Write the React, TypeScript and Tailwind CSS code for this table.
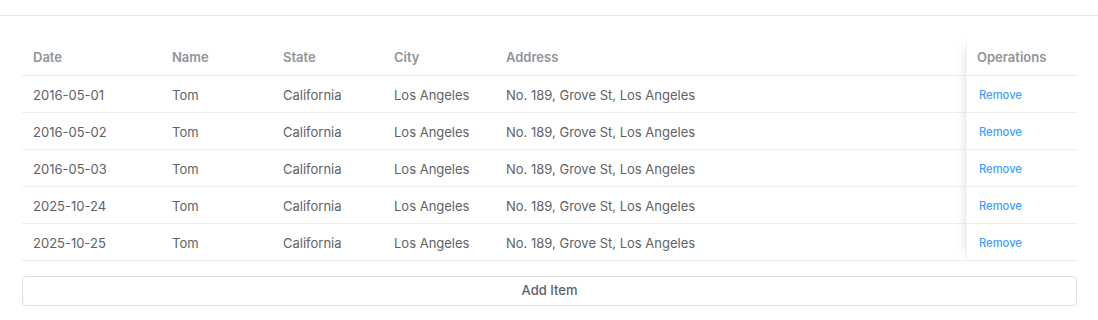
import React, { useState } from 'react';

type Row = {
  date: string;
  name: string;
  state: string;
  city: string;
  address: string;
};

const initialRows: Row[] = [
  { date: '2016-05-01', name: 'Tom', state: 'California', city: 'Los Angeles', address: 'No. 189, Grove St, Los Angeles' },
  { date: '2016-05-02', name: 'Tom', state: 'California', city: 'Los Angeles', address: 'No. 189, Grove St, Los Angeles' },
  { date: '2016-05-03', name: 'Tom', state: 'California', city: 'Los Angeles', address: 'No. 189, Grove St, Los Angeles' },
  { date: '2025-10-24', name: 'Tom', state: 'California', city: 'Los Angeles', address: 'No. 189, Grove St, Los Angeles' },
  { date: '2025-10-25', name: 'Tom', state: 'California', city: 'Los Angeles', address: 'No. 189, Grove St, Los Angeles' },
];

// widths of the scrolling columns
const cols: { key: keyof Row; label: string; w: string }[] = [
  { key: 'date', label: 'Date', w: 'w-[139px]' },
  { key: 'name', label: 'Name', w: 'w-[111px]' },
  { key: 'state', label: 'State', w: 'w-[111px]' },
  { key: 'city', label: 'City', w: 'w-[112px]' },
  { key: 'address', label: 'Address', w: 'w-[471px]' },
];

export default function App() {
  const [rows, setRows] = useState<Row[]>(initialRows);

  const removeRow = (i: number) => setRows(rows.filter((_, idx) => idx !== i));

  const addItem = () => {
    const d = new Date();
    d.setDate(d.getDate() + rows.length);
    setRows([
      ...rows,
      { date: d.toISOString().split('T')[0], name: 'Tom', state: 'California', city: 'Los Angeles', address: 'No. 189, Grove St, Los Angeles' },
    ]);
  };

  return (
    <div className="min-h-[320px] bg-white font-['Inter',sans-serif] text-[13px]">
      <div className="h-[16px] border-b border-[#e4e7ed]" />

      <div className="pl-[22px] pr-[21px] pt-[22px]">
        {/* table */}
        <div className="flex">
          <div className="w-[944px]">
            <div className="flex h-[38px] items-center border-b border-[#ebeef5] pt-[2px] font-semibold text-[#909399]">
              {cols.map((c) => (
                <div key={c.key} className={`${c.w} pl-[11px]`}>
                  {c.label}
                </div>
              ))}
            </div>
            {rows.map((r, i) => (
              <div key={i} className="flex h-[37px] items-center border-b border-[#ebeef5] pt-[3px] text-[#606266]">
                {cols.map((c) => (
                  <div key={c.key} className={`${c.w} pl-[11px]`}>
                    {r[c.key]}
                  </div>
                ))}
              </div>
            ))}
          </div>

          {/* fixed right column */}
          <div className="w-[111px] border-l border-[#f2f3f5] shadow-[-10px_0_10px_-10px_rgba(0,0,0,0.15)]">
            <div className="flex h-[38px] items-center border-b border-[#ebeef5] pl-[10px] pt-[2px] font-semibold text-[#909399]">
              Operations
            </div>
            {rows.map((_, i) => (
              <div key={i} className="flex h-[37px] items-center border-b border-[#ebeef5] pl-[12px] pt-[3px]">
                <button
                  type="button"
                  onClick={() => removeRow(i)}
                  className="text-[11.2px] font-medium text-[#409eff] hover:text-[#79bbff]"
                >
                  Remove
                </button>
              </div>
            ))}
          </div>
        </div>

        <button
          type="button"
          onClick={addItem}
          className="mt-[15px] flex h-[30px] w-full items-center justify-center rounded-[4px] border border-[#dcdfe6] bg-white font-medium text-[#606266] hover:border-[#c6e2ff] hover:bg-[#ecf5ff] hover:text-[#409eff]"
        >
          Add Item
        </button>
      </div>
    </div>
  );
}
